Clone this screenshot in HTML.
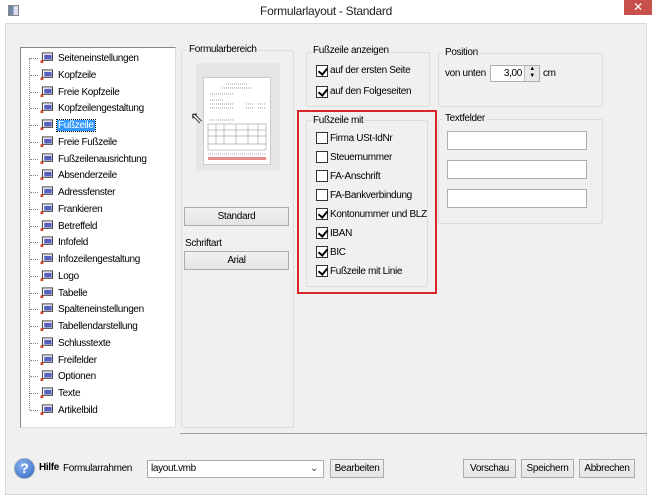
<!DOCTYPE html>
<html><head><meta charset="utf-8"><style>
*{box-sizing:border-box;margin:0;padding:0}
body{width:652px;height:500px;background:#fff;position:relative;overflow:hidden;font-family:"Liberation Sans",sans-serif;font-size:10px;letter-spacing:-0.35px;color:#000}
.a{position:absolute}
.client{left:5px;top:23px;width:642px;height:472px;background:#f0f0f0;border:1px solid #d9d9d9}
.grp{position:absolute;border:1px solid #dcdcdc;border-radius:2px}
.lbl{position:absolute;background:#f0f0f0;padding:0 2px;white-space:nowrap}
.btn{position:absolute;border:1px solid #acacac;background:linear-gradient(#f0f0f0,#e5e5e5);text-align:center;line-height:17px}
.cb{position:absolute;width:12px;height:12px;border:1px solid #333;background:#fff}
.cb.c::after{content:"";position:absolute;left:3px;top:0px;width:4px;height:7px;border-right:2px solid #000;border-bottom:2px solid #000;transform:rotate(40deg)}
.cbt{position:absolute;white-space:nowrap}
.inp{position:absolute;background:#fff;border:1px solid #abadb3}
.ti{position:absolute;left:58px;white-space:nowrap}
.ic{position:absolute;left:40px;width:14px;height:12px}
</style></head><body>
<div class="a" style="left:8px;top:5px;width:11px;height:11px;border:1px solid #888;background:linear-gradient(90deg,#6e8ca8 50%,#dde 50%)"></div>
<div class="a" style="left:0;top:4px;width:652px;text-align:center;font-size:12px;letter-spacing:-0.3px;color:#222">Formularlayout - Standard</div>
<div class="a" style="left:624px;top:0;width:28px;height:15px;background:#c7504b;color:#fff;text-align:center;font-size:12px;line-height:14px">✕</div>
<div class="a client"></div>

<div class="a" style="left:20px;top:47px;width:156px;height:381px;background:#fff;border:1px solid #828790;border-right-color:#ddd;border-bottom-color:#ddd"></div>
<div class="a" style="left:29px;top:58px;width:1px;height:352px;border-left:1px dotted #888"></div>
<div id="tree"></div>

<div class="grp" style="left:181px;top:50px;width:113px;height:378px"></div>
<div class="lbl" style="left:187px;top:44px">Formularbereich</div>
<div class="a" style="left:196px;top:63px;width:84px;height:108px;background:#e6e6e6"></div>
<div class="a" style="left:203px;top:77px;width:68px;height:88px;background:#fff;border:1px solid #ccc">
<svg width="66" height="86" viewBox="0 0 66 86">
<g stroke="#999" stroke-width="1" stroke-dasharray="1 1">
<line x1="22" y1="6" x2="44" y2="6"/><line x1="18" y1="10" x2="48" y2="10"/>
<line x1="6" y1="16" x2="30" y2="16"/><line x1="6" y1="22" x2="20" y2="22"/><line x1="6" y1="26" x2="30" y2="26"/><line x1="6" y1="30" x2="30" y2="30"/>
<line x1="42" y1="26" x2="50" y2="26"/><line x1="54" y1="26" x2="62" y2="26"/><line x1="42" y1="30" x2="50" y2="30"/><line x1="54" y1="30" x2="62" y2="30"/>
<line x1="6" y1="42" x2="30" y2="42"/>
</g>
<g fill="none" stroke="#aaa" stroke-width="0.7">
<rect x="4" y="46" width="58" height="26"/>
<line x1="4" y1="52" x2="62" y2="52"/><line x1="4" y1="58" x2="62" y2="58"/><line x1="4" y1="66" x2="62" y2="66"/>
<line x1="12" y1="46" x2="12" y2="66"/><line x1="20" y1="46" x2="20" y2="66"/><line x1="32" y1="46" x2="32" y2="66"/><line x1="44" y1="46" x2="44" y2="66"/><line x1="54" y1="46" x2="54" y2="66"/>
</g>
<line x1="4" y1="76" x2="62" y2="76" stroke="#aaa" stroke-dasharray="1 1"/>
<rect x="4" y="79" width="58" height="3" fill="#e78a8a"/>
</svg></div>
<div class="a" style="left:190px;top:108px;font-size:16px;color:#333">⇖</div>
<div class="btn" style="left:184px;top:207px;width:105px;height:19px">Standard</div>
<div class="a" style="left:185px;top:238px">Schriftart</div>
<div class="btn" style="left:184px;top:251px;width:105px;height:19px">Arial</div>

<div class="grp" style="left:306px;top:52px;width:124px;height:55px"></div>
<div class="lbl" style="left:311px;top:45px">Fußzeile anzeigen</div>
<div class="cb c" style="left:316px;top:65px"></div><div class="cbt" style="left:330px;top:65px">auf der ersten Seite</div>
<div class="cb c" style="left:316px;top:86px"></div><div class="cbt" style="left:330px;top:86px">auf den Folgeseiten</div>

<div class="a" style="left:297px;top:110px;width:140px;height:184px;border:2px solid #d6262b"></div>
<div class="grp" style="left:306px;top:120px;width:122px;height:167px"></div>
<div class="lbl" style="left:311px;top:115px">Fußzeile mit</div>
<div id="cbs"></div>

<div class="grp" style="left:438px;top:53px;width:165px;height:54px"></div>
<div class="lbl" style="left:443px;top:47px">Position</div>
<div class="a" style="left:445px;top:68px">von unten</div>
<div class="inp" style="left:490px;top:65px;width:50px;height:17px;text-align:right;padding-right:17px;line-height:15px">3,00</div>
<div class="a" style="left:524px;top:66px;width:15px;height:15px;background:#e8e8e8;border-left:1px solid #bbb;font-size:6px;line-height:7px;text-align:center">▲<br>▼</div>
<div class="a" style="left:543px;top:68px">cm</div>

<div class="grp" style="left:438px;top:119px;width:165px;height:105px"></div>
<div class="lbl" style="left:443px;top:113px">Textfelder</div>
<div class="inp" style="left:447px;top:131px;width:140px;height:19px"></div>
<div class="inp" style="left:447px;top:160px;width:140px;height:19px"></div>
<div class="inp" style="left:447px;top:189px;width:140px;height:19px"></div>

<div class="a" style="left:180px;top:433px;width:467px;height:1px;background:#a0a0a0"></div>

<div class="a" style="left:14px;top:458px;width:21px;height:21px;border-radius:50%;background:radial-gradient(circle at 40% 35%,#8fb8f0,#2a5fc0);border:1px solid #9ab;color:#fff;font-weight:bold;font-size:14px;text-align:center;line-height:19px;letter-spacing:0">?</div>
<div class="a" style="left:39px;top:462px;font-weight:bold">Hilfe</div>
<div class="a" style="left:63px;top:463px">Formularrahmen</div>
<div class="inp" style="left:147px;top:460px;width:177px;height:18px;border-color:#acacac;padding-left:3px;line-height:16px">layout.vmb<span style="position:absolute;right:5px;top:0;font-size:10px;color:#444">⌄</span></div>
<div class="btn" style="left:330px;top:459px;width:54px;height:19px">Bearbeiten</div>
<div class="btn" style="left:463px;top:459px;width:53px;height:19px">Vorschau</div>
<div class="btn" style="left:521px;top:459px;width:53px;height:19px">Speichern</div>
<div class="btn" style="left:579px;top:459px;width:56px;height:19px">Abbrechen</div>

<script>
var items=["Seiteneinstellungen","Kopfzeile","Freie Kopfzeile","Kopfzeilengestaltung","Fußzeile","Freie Fußzeile","Fußzeilenausrichtung","Absenderzeile","Adressfenster","Frankieren","Betreffeld","Infofeld","Infozeilengestaltung","Logo","Tabelle","Spalteneinstellungen","Tabellendarstellung","Schlusstexte","Freifelder","Optionen","Texte","Artikelbild"];
var h="";
items.forEach(function(t,i){var y=52+i*16.76;
h+='<div class="a" style="left:30px;top:'+(y+6)+'px;width:8px;border-top:1px dotted #888"></div>';
h+='<svg class="ic" style="top:'+(y)+'px" viewBox="0 0 14 13"><rect x="2" y="1" width="11" height="8" fill="#fff" stroke="#333"/><rect x="4" y="3" width="8" height="5" fill="#5560c0"/><rect x="0" y="9" width="3" height="3" fill="#d04020"/></svg>';
var sel=i==4?'background:#3399ff;color:#fff;padding:0 1px;left:57px;outline:1px dotted #000;':'';
h+='<div class="ti" style="top:'+(y+1)+'px;'+sel+'">'+t+'</div>';});
document.getElementById("tree").innerHTML=h;
var cb=[["Firma USt-IdNr",0],["Steuernummer",0],["FA-Anschrift",0],["FA-Bankverbindung",0],["Kontonummer und BLZ",1],["IBAN",1],["BIC",1],["Fußzeile mit Linie",1]];
h="";cb.forEach(function(c,i){var y=132+i*19;
h+='<div class="cb'+(c[1]?' c':'')+'" style="left:316px;top:'+y+'px"></div><div class="cbt" style="left:330px;top:'+(y+1)+'px">'+c[0]+'</div>';});
document.getElementById("cbs").innerHTML=h;
</script>
</body></html>
